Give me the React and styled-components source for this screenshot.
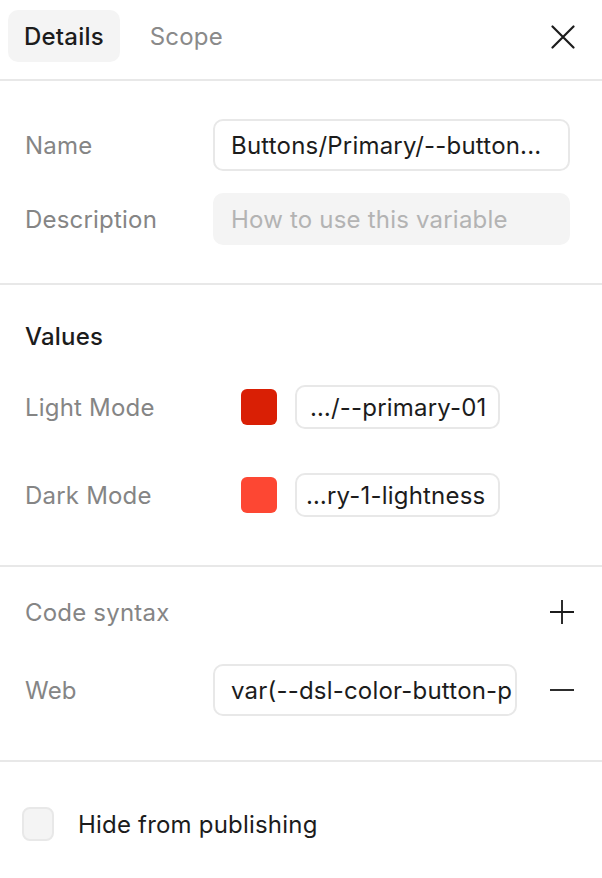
import React, { useState } from 'react';
import styled, { createGlobalStyle } from 'styled-components';

const GlobalStyle = createGlobalStyle`
  * { box-sizing: border-box; }
  body {
    margin: 0;
    background: #fff;
    font-family: Inter, "Noto Sans", sans-serif;
    letter-spacing: 0.2px;
    -webkit-font-smoothing: antialiased;
  }
`;

const Panel = styled.div`
  width: 602px;
  height: 878px;
  background: #fff;
  display: flex;
  flex-direction: column;
  overflow: hidden;
`;

const Section = styled.section`
  flex-shrink: 0;
  display: flex;
  flex-direction: column;
  gap: ${(p) => p.gap || 0}px;
  padding: ${(p) => p.pad};
  border-bottom: ${(p) => (p.last ? 'none' : '2px solid #e8e8e8')};
`;

const Header = styled.div`
  flex-shrink: 0;
  height: 81px;
  padding: 10px 27px 0 8px;
  display: flex;
  align-items: flex-start;
  border-bottom: 2px solid #e8e8e8;
`;

const Tab = styled.button`
  height: 52px;
  padding: 0 16px;
  margin-right: 14px;
  border: none;
  border-radius: 10px;
  background: ${(p) => (p.active ? '#f4f4f4' : 'transparent')};
  color: ${(p) => (p.active ? '#1c1c1c' : '#8a8a8a')};
  font-family: inherit;
  letter-spacing: inherit;
  font-size: 24px;
  font-weight: ${(p) => (p.active ? 500 : 400)};
  cursor: pointer;
`;

const IconButton = styled.button`
  margin-left: auto;
  width: 24px;
  height: 24px;
  padding: 0;
  border: none;
  background: none;
  display: flex;
  align-items: center;
  justify-content: center;
  color: #1c1c1c;
  cursor: pointer;
  align-self: ${(p) => p.self || 'center'};
  margin-top: ${(p) => p.top || 0}px;
`;

const Row = styled.div`
  display: flex;
  align-items: center;
  height: ${(p) => p.h || 52}px;
  margin-top: ${(p) => p.mt || 0}px;
`;

const Label = styled.span`
  width: 188px;
  flex-shrink: 0;
  font-size: 24px;
  color: ${(p) => (p.dark ? '#1c1c1c' : '#858585')};
  font-weight: ${(p) => (p.dark ? 500 : 400)};
`;

const Field = styled.div`
  width: ${(p) => p.w}px;
  height: ${(p) => p.h || 52}px;
  border-radius: 10px;
  border: 2px solid ${(p) => (p.filled ? '#f4f4f4' : '#e8e8e8')};
  background: ${(p) => (p.filled ? '#f4f4f4' : '#fff')};
  color: ${(p) => (p.filled ? '#b3b3b3' : '#1c1c1c')};
  font-size: 24px;
  padding: 0 ${(p) => p.px || 16}px;
  display: flex;
  align-items: center;
  white-space: nowrap;
  overflow: hidden;
  margin-left: ${(p) => p.ml || 0}px;
`;

const Swatch = styled.span`
  width: 36px;
  height: 36px;
  border-radius: 6px;
  background: ${(p) => p.color};
  margin-left: 28px;
  flex-shrink: 0;
`;

const Check = styled.span`
  width: 32px;
  height: 34px;
  border-radius: 8px;
  background: #f4f4f4;
  border: 2px solid #e8e8e8;
  margin-left: -3px;
  margin-right: 24px;
`;

const CheckText = styled.span`
  font-size: 24px;
  color: #1c1c1c;
`;

const Close = () => (
  <svg width="24" height="24" viewBox="0 0 24 24" fill="none" stroke="currentColor" strokeWidth="2.2" strokeLinecap="round">
    <path d="M1.5 1.5l21 21M22.5 1.5l-21 21" />
  </svg>
);

const Plus = () => (
  <svg width="26" height="26" viewBox="0 0 26 26" fill="none" stroke="currentColor" strokeWidth="2">
    <path d="M13 0v26M0 13h26" />
  </svg>
);

const Minus = () => (
  <svg width="26" height="26" viewBox="0 0 26 26" fill="none" stroke="currentColor" strokeWidth="2">
    <path d="M0 13h26" />
  </svg>
);

const App = () => {
  const [tab, setTab] = useState('details');

  return (
    <>
      <GlobalStyle />
      <Panel>
        <Header>
          <Tab active={tab === 'details'} onClick={() => setTab('details')}>Details</Tab>
          <Tab active={tab === 'scope'} onClick={() => setTab('scope')}>Scope</Tab>
          <IconButton self="flex-start" top={15}><Close /></IconButton>
        </Header>

        <Section pad="38px 32px 38px 25px" gap={22}>
          <Row>
            <Label>Name</Label>
            <Field w={357}>Buttons/Primary/--button...</Field>
          </Row>
          <Row>
            <Label>Description</Label>
            <Field w={357} filled>How to use this variable</Field>
          </Row>
        </Section>

        <Section pad="37px 25px 48px 25px">
          <Row h={28}>
            <Label dark>Values</Label>
          </Row>
          <Row h={44} mt={35}>
            <Label>Light Mode</Label>
            <Swatch color="#d91f05" />
            <Field w={205} h={44} ml={18} px={13}>…/--primary-01</Field>
          </Row>
          <Row h={44} mt={44}>
            <Label>Dark Mode</Label>
            <Swatch color="#fd4733" />
            <Field w={205} h={44} ml={18} px={9}>…ry-1-lightness</Field>
          </Row>
        </Section>

        <Section pad="31px 28px 44px 25px" gap={38}>
          <Row h={28}>
            <Label>Code syntax</Label>
            <IconButton><Plus /></IconButton>
          </Row>
          <Row>
            <Label>Web</Label>
            <Field w={304}>var(--dsl-color-button-p</Field>
            <IconButton><Minus /></IconButton>
          </Row>
        </Section>

        <Section pad="44px 25px 30px" last>
          <Row h={36}>
            <Check />
            <CheckText>Hide from publishing</CheckText>
          </Row>
        </Section>
      </Panel>
    </>
  );
};

export default App;
